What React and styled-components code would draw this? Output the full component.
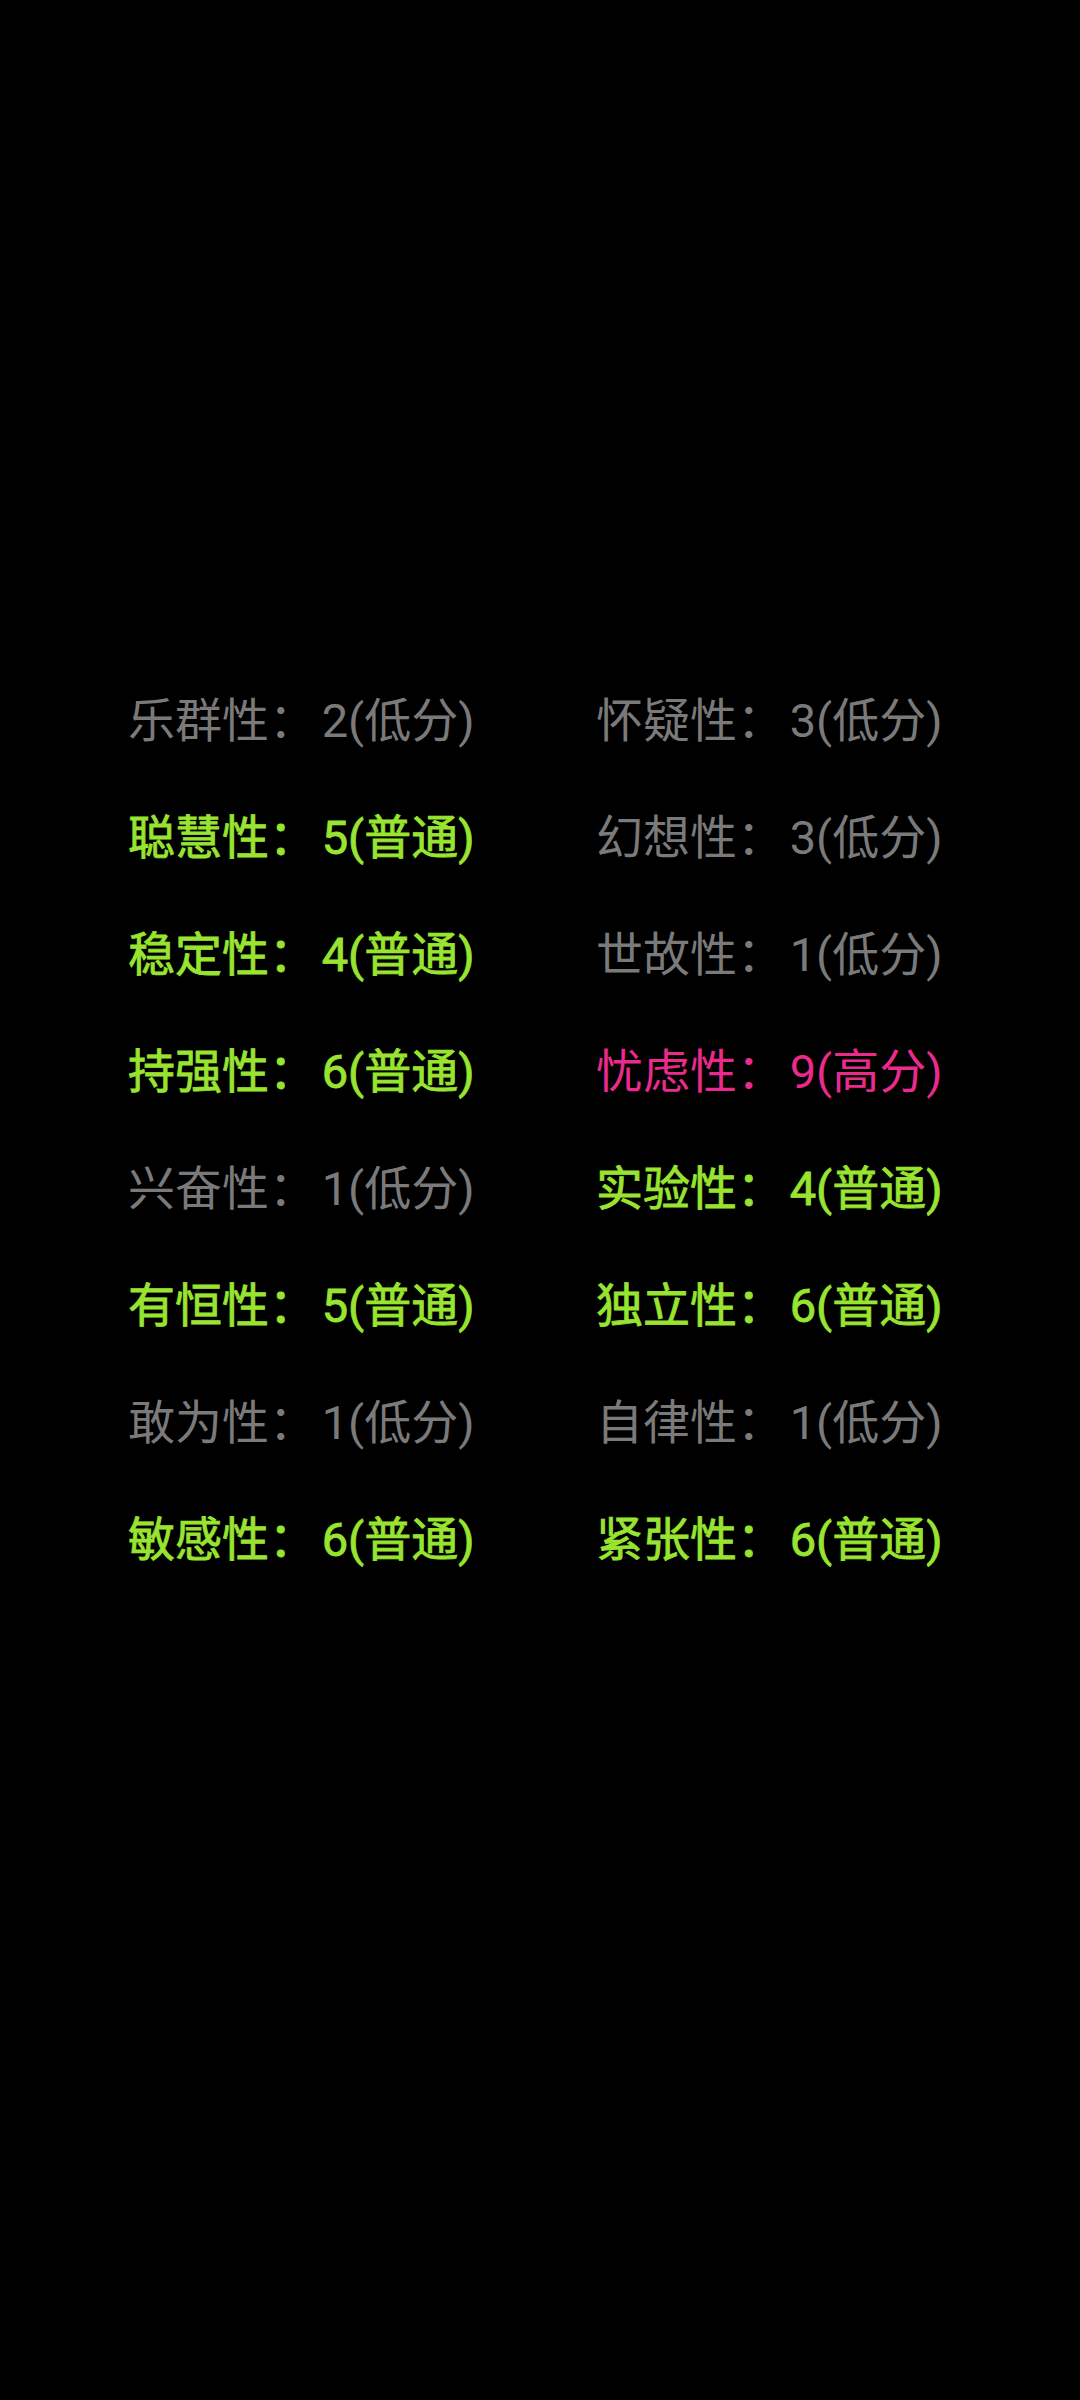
import React from "react";
import styled, { createGlobalStyle } from "styled-components";

const GlobalStyle = createGlobalStyle`
  html, body {
    margin: 0;
    padding: 0;
    background: #000;
  }
  body {
    font-family: Roboto, "Noto Sans CJK SC", sans-serif;
  }
`;

const traits = [
  ["乐群性", 2, "低分"],
  ["怀疑性", 3, "低分"],
  ["聪慧性", 5, "普通"],
  ["幻想性", 3, "低分"],
  ["稳定性", 4, "普通"],
  ["世故性", 1, "低分"],
  ["持强性", 6, "普通"],
  ["忧虑性", 9, "高分"],
  ["兴奋性", 1, "低分"],
  ["实验性", 4, "普通"],
  ["有恒性", 5, "普通"],
  ["独立性", 6, "普通"],
  ["敢为性", 1, "低分"],
  ["自律性", 1, "低分"],
  ["敏感性", 6, "普通"],
  ["紧张性", 6, "普通"],
];

const levelColors = {
  低分: "#7a7a7a",
  普通: "#98e430",
  高分: "#ea2a8c",
};

const App = () => {
  return (
    <Screen>
      <GlobalStyle />
      <Grid>
        {traits.map(([name, score, level]) => (
          <Trait key={name} level={level}>
            {name}
            <Colon>：</Colon>
            {score}({level})
          </Trait>
        ))}
      </Grid>
    </Screen>
  );
};

export default App;

const Screen = styled.div`
  width: 1080px;
  height: 2400px;
  background: #000;
  padding-top: 662px;
  box-sizing: border-box;
`;

const Grid = styled.div`
  display: grid;
  grid-template-columns: 468px auto;
  padding-left: 128px;
`;

const Trait = styled.div`
  height: 117px;
  line-height: 117px;
  font-size: 47px;
  white-space: nowrap;
  color: ${(props) => levelColors[props.level]};
  -webkit-text-stroke: ${(props) =>
    props.level === "普通" ? `0.8px ${levelColors[props.level]}` : "0"};
`;

const Colon = styled.span`
  display: inline-block;
  width: 1.12em;
`;
